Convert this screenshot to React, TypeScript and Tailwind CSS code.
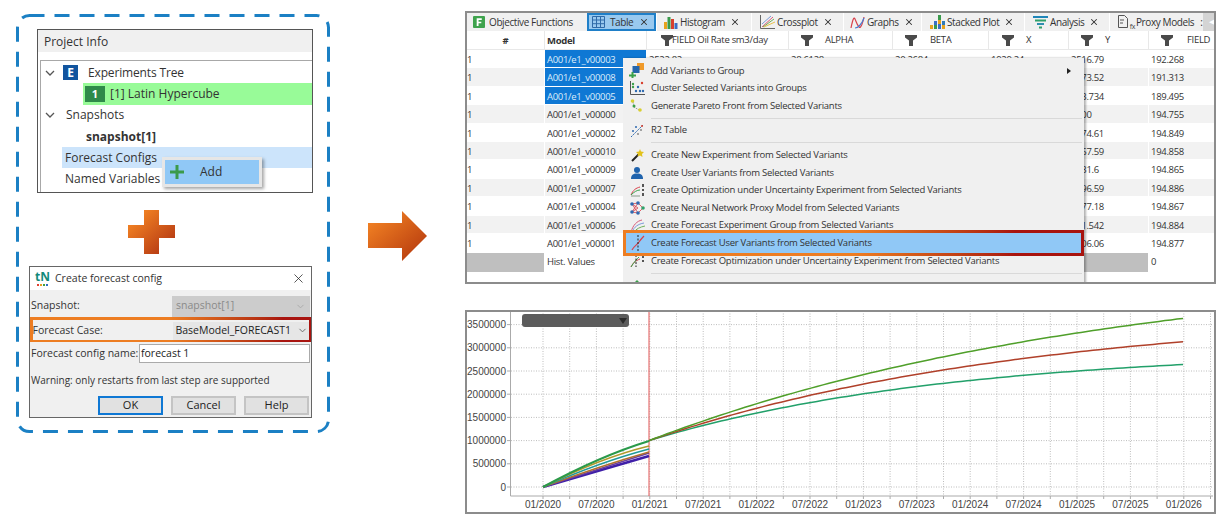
import React from 'react';
import { ChevronDown, X } from 'lucide-react';

const ui = '[font-family:"Open_Sans","Noto_Sans",sans-serif]';

const Chevron = () => (
  <svg width="10" height="6" viewBox="0 0 10 6" className="shrink-0">
    <path d="M1 1l4 4 4-4" fill="none" stroke="#555" strokeWidth="1.3" />
  </svg>
);

const Funnel = () => (
  <svg width="12" height="11" viewBox="0 0 12 11" className="shrink-0">
    <path d="M0 0h12v2.5L8 5.5V11H4V5.5L0 2.5z" fill="#4a4a4a" />
  </svg>
);

// tab icons
const IconF = () => (
  <svg width="12" height="12" viewBox="0 0 13 13" className="shrink-0">
    <rect width="13" height="13" rx="1" fill="#3fa34d" />
    <path d="M4 2.5h5.5v1.7H6v2h3v1.7H6v3H4z" fill="#fff" />
  </svg>
);
const IconTable = () => (
  <svg width="13" height="12" viewBox="0 0 13 12" fill="none" stroke="#2f6aa8" className="shrink-0">
    <path d="M.5.5h12v11H.5zM.5 4h12M.5 7.7h12M4.5.5v11M8.5.5v11" />
  </svg>
);
const IconHist = () => (
  <svg width="14" height="13" viewBox="0 0 14 13" className="shrink-0">
    <rect x="0" y="6" width="3" height="7" fill="#e8a21c" />
    <rect x="3.5" y="1" width="3" height="12" fill="#3a9a4c" />
    <rect x="7" y="3" width="3" height="10" fill="#d8402e" />
    <rect x="10.5" y="7" width="3" height="6" fill="#3b6fc4" />
  </svg>
);
const IconCross = () => (
  <svg width="15" height="14" viewBox="0 0 15 14" fill="none" className="shrink-0">
    <path d="M.5 0v13.5H15" stroke="#666" />
    <path d="M2 12L13 2" stroke="#d85a7a" />
    <path d="M3 12L14 4" stroke="#6fb05a" />
    <path d="M2 9L11 1" stroke="#7a9ad8" />
    <path d="M4 12L15 7" stroke="#e8c04a" />
  </svg>
);
const IconGraphs = () => (
  <svg width="15" height="13" viewBox="0 0 15 13" fill="none" className="shrink-0">
    <path d="M1 12C3 2 4 1 5 3s2 6 4 8 4-5 5-10" stroke="#d8404a" strokeWidth="1.2" />
    <path d="M5 12c3 0 7-4 9-10" stroke="#4a7ad0" strokeWidth="1.2" />
  </svg>
);
const IconStacked = () => (
  <svg width="15" height="14" viewBox="0 0 15 14" className="shrink-0">
    <rect x="0" y="10" width="3" height="4" fill="#e8a21c" />
    <rect x="4" y="6" width="3" height="4" fill="#3b6fc4" />
    <rect x="4" y="10" width="3" height="4" fill="#3a9a4c" />
    <rect x="8" y="0" width="3" height="5" fill="#3a9a4c" />
    <rect x="8" y="5" width="3" height="4" fill="#e8a21c" />
    <rect x="8" y="9" width="3" height="5" fill="#3b6fc4" />
    <rect x="12" y="6" width="3" height="4" fill="#2f7ab8" />
    <rect x="12" y="10" width="3" height="4" fill="#e8a21c" />
  </svg>
);
const IconAnalysis = () => (
  <svg width="15" height="13" viewBox="0 0 15 13" className="shrink-0">
    <rect x="0" y="0" width="15" height="2" fill="#1f86b8" />
    <rect x="2" y="3.5" width="11" height="2" fill="#2fa06a" />
    <rect x="4" y="7" width="7" height="2" fill="#2f8fb0" />
    <rect x="6" y="10.5" width="3" height="2" fill="#2fa06a" />
  </svg>
);
const IconProxy = () => (
  <span className="relative flex h-[14px] w-[17px] shrink-0">
    <svg width="10" height="13" viewBox="0 0 10 13" fill="none" stroke="#555">
      <path d="M.5.5h6l3 3v9h-9zM2 5h4M2 8h3" />
    </svg>
    <span className="absolute bottom-[-1px] right-0 text-[7px] leading-none text-[#444]">fx</span>
  </span>
);

// menu icons
const MenuAdd = () => (
  <svg width="16" height="15" viewBox="0 0 16 15">
    <rect x="8" y="0" width="7" height="7" fill="#f09a2a" />
    <rect x="3.5" y="3" width="7" height="7" fill="#2566ad" />
    <path d="M0 11.5h2.5V9h2v2.5H7v2H4.5V15h-2v-1.5H0z" fill="#3aa04a" />
  </svg>
);
const MenuCluster = () => (
  <svg width="15" height="14" viewBox="0 0 15 14">
    <path d="M.5 0v13.5H15" fill="none" stroke="#555" />
    <circle cx="3" cy="3" r="1.2" fill="#3aa04a" />
    <circle cx="3" cy="6" r="1.2" fill="#3aa04a" />
    <circle cx="12" cy="2" r="1.2" fill="#d8402e" />
    <circle cx="8" cy="6" r="1.2" fill="#2f6ab0" />
    <circle cx="6" cy="10" r="1.2" fill="#2f6ab0" />
    <circle cx="10" cy="10" r="1.2" fill="#2f6ab0" />
    <circle cx="13" cy="10" r="1.2" fill="#2f6ab0" />
  </svg>
);
const MenuPareto = () => (
  <svg width="14" height="14" viewBox="0 0 14 14">
    <path d="M3 3l1 5 5 3" fill="none" stroke="#999" strokeDasharray="1.5 1" />
    <circle cx="2.5" cy="2" r="1.8" fill="#d9cf30" />
    <circle cx="4" cy="7" r="1.5" fill="#3aa04a" />
    <circle cx="10" cy="11" r="1.8" fill="#d9cf30" />
  </svg>
);
const MenuR2 = () => (
  <svg width="14" height="14" viewBox="0 0 14 14">
    <path d="M1 13L13 1" stroke="#2f6ab0" strokeDasharray="2 1" />
    <circle cx="3" cy="7" r="1" fill="#2f6ab0" />
    <circle cx="6" cy="3" r="1" fill="#2f6ab0" />
    <circle cx="8" cy="10" r="1" fill="#888" />
    <circle cx="11" cy="6" r="1" fill="#888" />
    <circle cx="12" cy="2" r="1" fill="#d8402e" />
  </svg>
);
const MenuWand = () => (
  <svg width="13" height="13" viewBox="0 0 13 13">
    <path d="M1 12l6.5-6.5" stroke="#222" strokeWidth="2" />
    <path d="M9 0l1 2.5L13 3l-2 2 .5 3L9 6.5 6.5 7.5 7 5 5 3l3-.5z" fill="#e2c21c" />
  </svg>
);
const MenuUser = () => (
  <svg width="12" height="12" viewBox="0 0 12 12">
    <circle cx="6" cy="3" r="3" fill="#1f63ad" />
    <path d="M0 12c0-4 2-5.5 6-5.5s6 1.5 6 5.5z" fill="#1f63ad" />
  </svg>
);
const MenuOpt = () => (
  <svg width="15" height="14" viewBox="0 0 15 14" fill="none">
    <path d="M1 12C3 7 6 5 10 4" stroke="#d8404a" />
    <path d="M1 12C4 9 7 7 10 7" stroke="#3aa04a" />
    <path d="M1 13H10" stroke="#8a9a8a" />
    <path d="M13 1v3M13 6v2M13 10v3" stroke="#222" strokeWidth="1.5" />
  </svg>
);
const MenuNN = () => (
  <svg width="15" height="14" viewBox="0 0 15 14" fill="none">
    <path d="M2 3l6-1 5 5-5 5-6-1 6-4zM2 11l6-9M2 3l6 9" stroke="#d8404a" strokeWidth=".8" />
    <circle cx="2" cy="3" r="1.8" fill="#2f6ab0" />
    <circle cx="2" cy="11" r="1.8" fill="#2f6ab0" />
    <circle cx="8" cy="2" r="1.8" fill="#2f6ab0" />
    <circle cx="8" cy="12" r="1.8" fill="#2f6ab0" />
    <circle cx="13" cy="7" r="1.8" fill="#2fa06a" />
  </svg>
);
const MenuGroup = () => (
  <svg width="15" height="14" viewBox="0 0 15 14" fill="none">
    <path d="M1 13C3 6 7 2 12 1" stroke="#d85a7a" />
    <path d="M2 13C4 8 8 5 14 4" stroke="#7a9ad8" />
    <path d="M4 13C6 10 10 8 15 7" stroke="#6fb05a" />
  </svg>
);
const MenuFcUser = () => (
  <svg width="15" height="17" viewBox="0 0 15 17" fill="none">
    <path d="M1 15C3 11 6 10 8 7s3-4 5-6" stroke="#d8404a" strokeWidth="1.2" />
    <path d="M7 0v17" stroke="#222" strokeDasharray="2 1.5" />
  </svg>
);
const MenuFcOpt = () => (
  <svg width="15" height="14" viewBox="0 0 15 14" fill="none">
    <path d="M1 13C3 9 5 7 10 5" stroke="#d8404a" />
    <path d="M1 13C4 8 7 5 9 3" stroke="#3aa04a" />
    <path d="M6 1v12" stroke="#222" strokeDasharray="2 1.5" />
    <path d="M13 1v3M13 6v2" stroke="#222" strokeWidth="1.5" />
  </svg>
);
const MenuSelect = () => (
  <svg width="12" height="12" viewBox="0 0 12 12">
    <path d="M6 0l6 6H8v6H4V6H0z" fill="#3aa04a" />
  </svg>
);

const tabs = [
  { label: 'Histogram', icon: <IconHist />, w: 'w-[95px]', pl: 'pl-[7px]' },
  { label: 'Crossplot', icon: <IconCross />, w: 'w-[92px]', pl: 'pl-[8px]' },
  { label: 'Graphs', icon: <IconGraphs />, w: 'w-[78px]', pl: 'pl-[6px]' },
  { label: 'Stacked Plot', icon: <IconStacked />, w: 'w-[103px]', pl: 'pl-[8px]' },
  { label: 'Analysis', icon: <IconAnalysis />, w: 'w-[85px]', pl: 'pl-[8px]' },
];

const colWidths = ['w-[77px]', 'w-[102px]', 'w-[142px]', 'w-[104px]', 'w-[96px]', 'w-[80px]', 'w-[80px]', 'w-[66px]'];

const rows = [
  ['A001/e1_v00003', '2522.82', '28.6128', '20.2684', '1929.24', '2516.79', '192.268'],
  ['A001/e1_v00008', '', '', '', '', '2473.52', '191.313'],
  ['A001/e1_v00005', '', '', '', '', '243.734', '189.495'],
  ['A001/e1_v00000', '', '', '', '', '2600', '194.755'],
  ['A001/e1_v00002', '', '', '', '', '2574.61', '194.849'],
  ['A001/e1_v00010', '', '', '', '', '2567.59', '194.858'],
  ['A001/e1_v00009', '', '', '', '', '2531.6', '194.865'],
  ['A001/e1_v00007', '', '', '', '', '2596.59', '194.886'],
  ['A001/e1_v00004', '', '', '', '', '2577.18', '194.867'],
  ['A001/e1_v00006', '', '', '', '', '251.542', '194.884'],
  ['A001/e1_v00001', '', '', '', '', '2506.06', '194.877'],
];

const TableRow = ({ row, i }: { row: string[]; i: number }) => (
  <div className="flex h-[18.4px] border-b border-white text-[9.5px] leading-[19px] tracking-[-0.3px] text-[#333]">
    <div className={`${colWidths[0]} ${i % 2 ? 'bg-[#f2f2f2]' : 'bg-white'}`}>1</div>
    {row.map((cell, c) => (
      <div
        key={c}
        className={`${colWidths[c + 1]} overflow-hidden whitespace-nowrap border-l border-white pl-[2px] ${
          c === 0 && i < 3 ? 'bg-[#0f78d4] text-[#dcecfa]' : i % 2 ? 'bg-[#f2f2f2]' : 'bg-white'
        }`}
      >
        {cell}
      </div>
    ))}
  </div>
);

const MenuItem = ({ icon, label }: { icon?: React.ReactNode; label: string }) => (
  <div className="flex h-[17.6px] items-center">
    <span className="flex w-[28px] shrink-0 justify-center">{icon}</span>
    <span className="whitespace-nowrap">{label}</span>
  </div>
);

const Sep = () => <div className="my-[3px] ml-[28px] mr-[2px] h-px bg-[#d9d9d9]" />;

const years = ['01/2020', '07/2020', '01/2021', '07/2021', '01/2022', '07/2022', '01/2023', '07/2023', '01/2024', '07/2024', '01/2025', '07/2025', '01/2026'];
const yTicks = [0, 500000, 1000000, 1500000, 2000000, 2500000, 3000000, 3500000];
const y0 = 487;
const yStep = 23.2;
const x0 = 543;
const xStep = 53.4;

// saturating curve from the history end point at 01/2021
const forecast = (a: number, tau: number) => {
  let d = 'M649 440.6';
  for (let x = 6; x <= 534; x += 6) {
    d += `L${649 + x} ${(440.6 - a * (1 - Math.exp(-x / tau))).toFixed(1)}`;
  }
  return d;
};

const Chart = () => (
  <svg viewBox="467 312 747 200" className="block h-full w-full">
    {yTicks.map((t, i) => (
      <g key={t}>
        <path d={`M511 ${y0 - i * yStep}H1213`} stroke="#bdbdbd" strokeDasharray="1 1.5" />
        <path d={`M507 ${y0 - i * yStep}H511`} stroke="#aaa" />
        <text x="506" y={y0 - i * yStep + 3.5} textAnchor="end" fontSize="10" fontFamily="Liberation Sans" fill="#444">
          {t}
        </text>
      </g>
    ))}
    {Array.from({ length: 26 }, (_, i) => (
      <g key={i}>
        <path d={`M${x0 + (i * xStep) / 2} 311V496`} stroke="#bdbdbd" strokeDasharray="1 1.5" />
        <path d={`M${x0 + (i * xStep) / 2} 496v3`} stroke="#aaa" />
      </g>
    ))}
    {years.map((y, i) => (
      <text key={y} x={x0 + i * xStep} y="508" textAnchor="middle" fontSize="10" fontFamily="Liberation Sans" fill="#444">
        {y}
      </text>
    ))}
    <path d="M510.5 311V496H1213" fill="none" stroke="#aaa" />
    <path d="M649 311V496" stroke="#e25555" />
    <path d="M543 487L649 456" stroke="#3f1fa8" strokeWidth="2.5" />
    <path d="M543 487L649 453" stroke="#6a3fa0" strokeWidth="1.5" />
    <path d="M543 487Q600 466 649 452" fill="none" stroke="#b0702a" strokeWidth="1.5" />
    <path d="M543 487Q600 462 649 449" fill="none" stroke="#1f9a9a" strokeWidth="1.5" />
    <path d="M543 487Q600 458 649 446" fill="none" stroke="#b09a2a" strokeWidth="1.5" />
    <path d="M543 487Q600 456 649 441" fill="none" stroke="#2a9a4a" strokeWidth="2" />
    <path d={forecast(91.5, 300)} fill="none" stroke="#22a06a" strokeWidth="1.5" />
    <path d={forecast(131, 380)} fill="none" stroke="#b0402a" strokeWidth="1.5" />
    <path d={forecast(180, 470)} fill="none" stroke="#4f9f2a" strokeWidth="1.5" />
  </svg>
);

const TreeRow = ({ className = '', children }: { className?: string; children: React.ReactNode }) => (
  <div className={`flex h-[21.3px] items-center whitespace-nowrap ${className}`}>{children}</div>
);

const DialogButton = ({ label, primary }: { label: string; primary?: boolean }) => (
  <div
    className={`flex h-[19px] w-[65px] items-center justify-center bg-[#e1e1e1] text-[11px] text-[#222] ${
      primary ? 'border-2 border-[#0f78d4]' : 'border-2 border-[#c4c4c4]'
    }`}
  >
    {label}
  </div>
);

export default function App() {
  return (
    <div className={`flex h-[521px] w-[1221px] overflow-hidden bg-white ${ui}`}>
      {/* left: dashed box */}
      <div className="relative ml-[16px] mt-[14px] flex h-[419px] w-[314px] shrink-0 flex-col">
        <svg className="absolute left-0 top-0" width="314" height="419" fill="none">
          <rect x="1.5" y="1.5" width="311" height="416" rx="12" stroke="#1b80c4" strokeWidth="3" strokeDasharray="15 10" />
        </svg>

        <div className="relative ml-[21px] mt-[15px] h-[164px] w-[276px] border border-[#555] bg-white text-[12px] text-[#333]">
          <div className="flex h-[22px] items-center bg-[#f0f0f0] pl-[6px] pt-[2px] text-[12px]">Project Info</div>
          <div className="ml-[2px] mt-[8px] h-[132px] border border-b-0 border-r-0 border-[#a8a8a8] pt-[1px]">
            <TreeRow>
              <span className="ml-[4px]"><Chevron /></span>
              <span className="ml-[8px] flex h-[15px] w-[15px] items-center justify-center bg-[#12559f] text-[12px] font-bold text-white">E</span>
              <span className="ml-[10px] tracking-[-0.15px]">Experiments Tree</span>
            </TreeRow>
            <TreeRow className="ml-[42px] bg-[#98fb98]">
              <span className="ml-[2px] flex h-[16px] w-[20px] items-center justify-center bg-[#2f8a4a] text-[11px] font-bold text-white">1</span>
              <span className="ml-[5px]">[1] Latin Hypercube</span>
            </TreeRow>
            <TreeRow>
              <span className="ml-[4px]"><Chevron /></span>
              <span className="ml-[11px]">Snapshots</span>
            </TreeRow>
            <TreeRow className="pl-[45px] font-bold">snapshot[1]</TreeRow>
            <TreeRow className="ml-[21px] bg-[#cce4fb] pl-[3px]">Forecast Configs</TreeRow>
            <TreeRow className="pl-[24px]">Named Variables</TreeRow>
          </div>
          {/* context menu */}
          <div className="absolute left-[124px] top-[127px] h-[30px] w-[100px] border-[3px] border-[#e6e6e6] bg-[#90c8f6] shadow-[2px_2px_3px_rgba(0,0,0,0.35)]">
            <div className="flex h-full items-center pl-[5px]">
              <svg width="14" height="14" viewBox="0 0 14 14"><path d="M5.5 0h3v5.5H14v3H8.5V14h-3V8.5H0v-3h5.5z" fill="#3b9a4a" /></svg>
              <span className="ml-[16px] text-[12px] font-medium">Add</span>
            </div>
          </div>
        </div>

        <svg className="ml-[112px] mt-[17px] shrink-0" width="47" height="44" viewBox="0 0 47 44">
          <defs>
            <linearGradient id="plusGrad" x1="0" y1="0" x2="1" y2="1">
              <stop offset="0.2" stopColor="#ee7d22" />
              <stop offset="1" stopColor="#ab2d10" />
            </linearGradient>
          </defs>
          <path d="M16 0h15v15h16v13H31v16H16V28H0V15h16z" fill="url(#plusGrad)" />
        </svg>

        {/* forecast dialog */}
        <div className="relative ml-[13px] mt-[12px] h-[152px] w-[283px] border border-[#666] bg-[#f0f0f0] text-[10.5px] text-[#333]">
          <div className="flex h-[23px] items-center bg-white pl-[5px] text-[10.5px]">
            <span className="relative flex h-[15px] w-[15px] shrink-0 flex-col items-center">
              <span className="text-[12px] font-bold leading-[12px] text-[#128a7a]">tN</span>
              <span className="mt-[1px] flex gap-[1px]">
                <i className="h-[2px] w-[2px] bg-[#e04030]" />
                <i className="h-[2px] w-[2px] bg-[#e8a020]" />
                <i className="h-[2px] w-[2px] bg-[#40a040]" />
                <i className="h-[2px] w-[2px] bg-[#3070c0]" />
              </span>
            </span>
            <span className="ml-[5px]">Create forecast config</span>
            <X size={15} strokeWidth={1.2} className="ml-auto mr-[5px] text-[#222]" />
          </div>
          <div className="flex h-[27px] items-center pl-[1px] pt-[5px]">
            Snapshot:
            <span className="ml-auto mr-[1px] flex h-[21px] w-[138px] items-center justify-between bg-[#cccccc] pl-[4px] pr-[4px] text-[#8a8a8a]">
              snapshot[1]
              <ChevronDown size={11} className="text-[#aaa]" />
            </span>
          </div>
          <div className="bg-linear-to-r from-[#ed7d22] from-50% to-[#a8140f] to-90% p-[2.5px]">
            <div className="flex h-[20px] items-center bg-[#f0f0f0] pt-[2px]">
              Forecast Case:
              <span className="ml-auto flex h-[18px] w-[136px] items-center justify-between bg-[#e6e6e6] pl-[3px] pr-[1px] text-[#222]">
                BaseModel_FORECAST1
                <ChevronDown size={11} className="text-[#666]" />
              </span>
            </div>
          </div>
          <div className="mt-[1px] flex h-[21px] items-center pl-[1px]">
            Forecast config name:
            <span className="ml-auto mr-[1px] flex h-[19px] w-[171px] items-center border border-[#aaa] bg-white pl-[1px] text-[#222]">forecast 1</span>
          </div>
          <div className="mt-[9px] pl-[1px] text-[10px] leading-[14px]">Warning: only restarts from last step are supported</div>
          <div className="mt-[9px] flex justify-end gap-[8px] pr-[2px]">
            <DialogButton label="OK" primary />
            <DialogButton label="Cancel" />
            <DialogButton label="Help" />
          </div>
        </div>
      </div>

      {/* arrow */}
      <svg className="ml-[38px] mt-[211px] shrink-0" width="59" height="50" viewBox="0 0 59 50">
        <defs>
          <linearGradient id="arrowGrad" x1="0" y1="0" x2="1" y2="1">
            <stop offset="0.15" stopColor="#ee7d22" />
            <stop offset="1" stopColor="#b0330c" />
          </linearGradient>
        </defs>
        <path d="M0 12h34V0l25 25-25 25V37H0z" fill="url(#arrowGrad)" />
      </svg>

      {/* right column */}
      <div className="ml-[38px] mt-[11px] flex w-[751px] shrink-0 flex-col">
        <div className="relative h-[273px] overflow-hidden border-2 border-[#8c8c8c] bg-white">
          {/* tabs */}
          <div className="flex h-[18px] items-center bg-[#f0f0f0] text-[10px] tracking-[-0.4px] text-[#333]">
            <div className="flex h-full w-[120px] items-center gap-[4px] pl-[6px]">
              <IconF />
              <span className="whitespace-nowrap">Objective Functions</span>
            </div>
            <div className="flex h-full w-[69px] items-center gap-[5px] border-2 border-[#1f7fc8] bg-[#99c9ef] pl-[3px]">
              <IconTable />
              <span>Table</span>
              <X size={10} strokeWidth={2.5} className="ml-[1px] shrink-0" />
            </div>
            {tabs.map((t) => (
              <div key={t.label} className={`flex h-full ${t.w} ${t.pl} items-center gap-[2px] border-l border-white`}>
                {t.icon}
                <span className="whitespace-nowrap">{t.label}</span>
                <X size={10} strokeWidth={2.5} className="ml-[3px] shrink-0" />
              </div>
            ))}
            <div className="flex h-full flex-1 items-center gap-[1px] overflow-hidden border-l border-white pl-[8px]">
              <IconProxy />
              <span className="whitespace-nowrap">Proxy Models</span>
              <span className="ml-[5px]">:</span>
              <span className="ml-auto flex h-full w-[15px] shrink-0 items-center justify-center bg-[#d4d4d4] text-[7px] text-white">◀</span>
            </div>
          </div>
          {/* table header */}
          <div className="flex h-[19px] border-b border-[#e8e8e8] text-[9.5px] leading-[20px] tracking-[-0.3px] text-[#333]">
            <div className={`${colWidths[0]} text-center font-bold`}>#</div>
            <div className={`${colWidths[1]} border-l border-[#e8e8e8] pl-[2px] font-bold`}>Model</div>
            <div className={`${colWidths[2]} flex items-center border-l border-[#e8e8e8] pl-[14px]`}><Funnel /><span className="-ml-[1px] whitespace-nowrap">FIELD Oil Rate sm3/day</span></div>
            <div className={`${colWidths[3]} flex items-center border-l border-[#e8e8e8] pl-[12px]`}><Funnel /><span className="ml-[12px]">ALPHA</span></div>
            <div className={`${colWidths[4]} flex items-center border-l border-[#e8e8e8] pl-[12px]`}><Funnel /><span className="ml-[13px]">BETA</span></div>
            <div className={`${colWidths[5]} flex items-center border-l border-[#e8e8e8] pl-[13px]`}><Funnel /><span className="ml-[12px]">X</span></div>
            <div className={`${colWidths[6]} flex items-center border-l border-[#e8e8e8] pl-[12px]`}><Funnel /><span className="ml-[12px]">Y</span></div>
            <div className={`${colWidths[7]} flex items-center overflow-hidden border-l border-[#e8e8e8] pl-[12px]`}><Funnel /><span className="ml-[14px]">FIELD</span></div>
          </div>
          {rows.map((r, i) => (
            <TableRow key={r[0]} row={r} i={i} />
          ))}
          <div className="mt-[1px] flex h-[18.4px] text-[9.5px] leading-[18px] tracking-[-0.3px] text-[#333]">
            <div className={`${colWidths[0]} bg-[#bfbfbf]`} />
            <div className={`${colWidths[1]} border-l border-white pl-[2px]`}>Hist. Values</div>
            <div className={colWidths[2]} />
            <div className={colWidths[3]} />
            <div className={colWidths[4]} />
            <div className={colWidths[5]} />
            <div className={`${colWidths[6]} bg-[#bfbfbf]`} />
            <div className={`${colWidths[7]} border-l border-white pl-[2px]`}>0</div>
          </div>

          {/* context menu over the table */}
          <div className="absolute left-[156px] top-[45px] h-[230px] w-[461px] bg-[#f0f0f0] pt-[4px] text-[9.5px] tracking-[-0.25px] text-[#333] shadow-[2px_0_2px_rgba(0,0,0,0.3)]">
            <div className="relative">
              <MenuItem icon={<MenuAdd />} label="Add Variants to Group" />
              <span className="absolute right-[13px] top-[6px] h-0 w-0 border-y-[3px] border-l-[4px] border-y-transparent border-l-[#222]" />
            </div>
            <MenuItem icon={<MenuCluster />} label="Cluster Selected Variants into Groups" />
            <MenuItem icon={<MenuPareto />} label="Generate Pareto Front from Selected Variants" />
            <Sep />
            <MenuItem icon={<MenuR2 />} label="R2 Table" />
            <Sep />
            <MenuItem icon={<MenuWand />} label="Create New Experiment from Selected Variants" />
            <MenuItem icon={<MenuUser />} label="Create User Variants from Selected Variants" />
            <MenuItem icon={<MenuOpt />} label="Create Optimization under Uncertainty Experiment from Selected Variants" />
            <MenuItem icon={<MenuNN />} label="Create Neural Network Proxy Model from Selected Variants" />
            <MenuItem icon={<MenuGroup />} label="Create Forecast Experiment Group from Selected Variants" />
            <div className="relative z-10 -my-[4px] h-[26px] bg-linear-to-r from-[#ed7d22] from-50% to-[#a8140f] to-85% p-[3px]">
              <div className="flex h-full items-center bg-[#90c8f6]">
                <span className="flex w-[25px] shrink-0 justify-center"><MenuFcUser /></span>
                <span className="whitespace-nowrap">Create Forecast User Variants from Selected Variants</span>
              </div>
            </div>
            <MenuItem icon={<MenuFcOpt />} label="Create Forecast Optimization under Uncertainty Experiment from Selected Variants" />
            <Sep />
            <MenuItem icon={<MenuSelect />} label="Reload Selected Models" />
          </div>
        </div>

        <div className="mt-[26px] h-[204px] border-2 border-[#8c8c8c] bg-white">
          <div className="relative h-full">
            <Chart />
            <div className="absolute left-[55px] top-[2px] flex h-[13px] w-[107px] items-center justify-end rounded-[3px] bg-[#5c5c5c] pr-[2px]">
              <span className="h-0 w-0 border-x-[4px] border-t-[6px] border-x-transparent border-t-[#2c2c2c]" />
            </div>
          </div>
        </div>
      </div>
    </div>
  );
}
